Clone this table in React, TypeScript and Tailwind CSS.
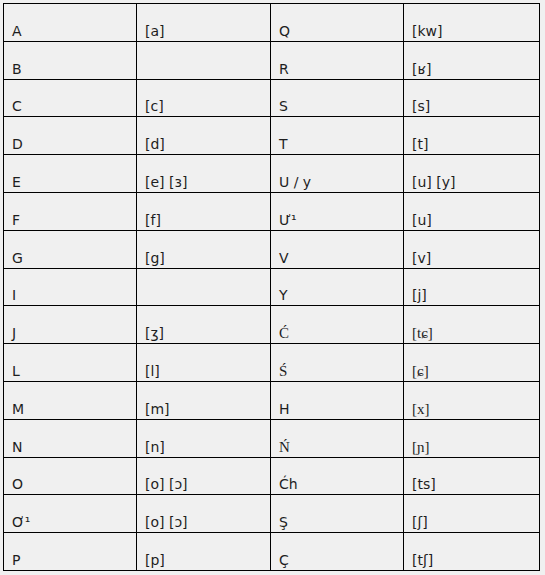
import React from 'react';

type Cell = { text: string; serif?: boolean };

const rows: [Cell, Cell, Cell, Cell][] = [
  [{ text: 'A' }, { text: '[a]' }, { text: 'Q' }, { text: '[kw]' }],
  [{ text: 'B' }, { text: '' }, { text: 'R' }, { text: '[ʁ]' }],
  [{ text: 'C' }, { text: '[c]' }, { text: 'S' }, { text: '[s]' }],
  [{ text: 'D' }, { text: '[d]' }, { text: 'T' }, { text: '[t]' }],
  [{ text: 'E' }, { text: '[e] [ɜ]' }, { text: 'U / y' }, { text: '[u] [y]' }],
  [{ text: 'F' }, { text: '[f]' }, { text: 'Ư¹' }, { text: '[u]' }],
  [{ text: 'G' }, { text: '[g]' }, { text: 'V' }, { text: '[v]' }],
  [{ text: 'I' }, { text: '' }, { text: 'Y' }, { text: '[j]' }],
  [{ text: 'J' }, { text: '[ʒ]' }, { text: 'Ć', serif: true }, { text: '[tɕ]', serif: true }],
  [{ text: 'L' }, { text: '[l]' }, { text: 'Ś', serif: true }, { text: '[ɕ]', serif: true }],
  [{ text: 'M' }, { text: '[m]' }, { text: 'H' }, { text: '[x]', serif: true }],
  [{ text: 'N' }, { text: '[n]' }, { text: 'Ń', serif: true }, { text: '[ɲ]', serif: true }],
  [{ text: 'O' }, { text: '[o] [ɔ]' }, { text: 'Ćh' }, { text: '[ts]' }],
  [{ text: 'Ơ¹' }, { text: '[o] [ɔ]' }, { text: 'Ş' }, { text: '[ʃ]' }],
  [{ text: 'P' }, { text: '[p]' }, { text: 'Ç' }, { text: '[tʃ]' }],
];

export default function App() {
  return (
    <div className="w-[545px] h-[575px] bg-[#f0f0f0] pt-[3px] pl-[3px]">
      <div className="grid grid-cols-[133px_134px_133px_136px] grid-rows-[repeat(15,minmax(0,1fr))] h-[568px] w-[537px] border-l border-t border-black text-[#1e1e1e]">
        {rows.map((row, i) =>
          row.map((cell, j) => (
            <div
              key={`${i}-${j}`}
              className={
                cell.serif
                  ? 'flex items-end border-r border-b border-black pl-[8px] pb-[2px] leading-[16px] text-[15px] font-[Liberation_Serif,serif]'
                  : 'flex items-end border-r border-b border-black pl-[8px] pb-[2px] leading-[16px] text-[14px] font-[DejaVu_Sans,sans-serif]'
              }
            >
              {cell.text}
            </div>
          ))
        )}
      </div>
    </div>
  );
}
